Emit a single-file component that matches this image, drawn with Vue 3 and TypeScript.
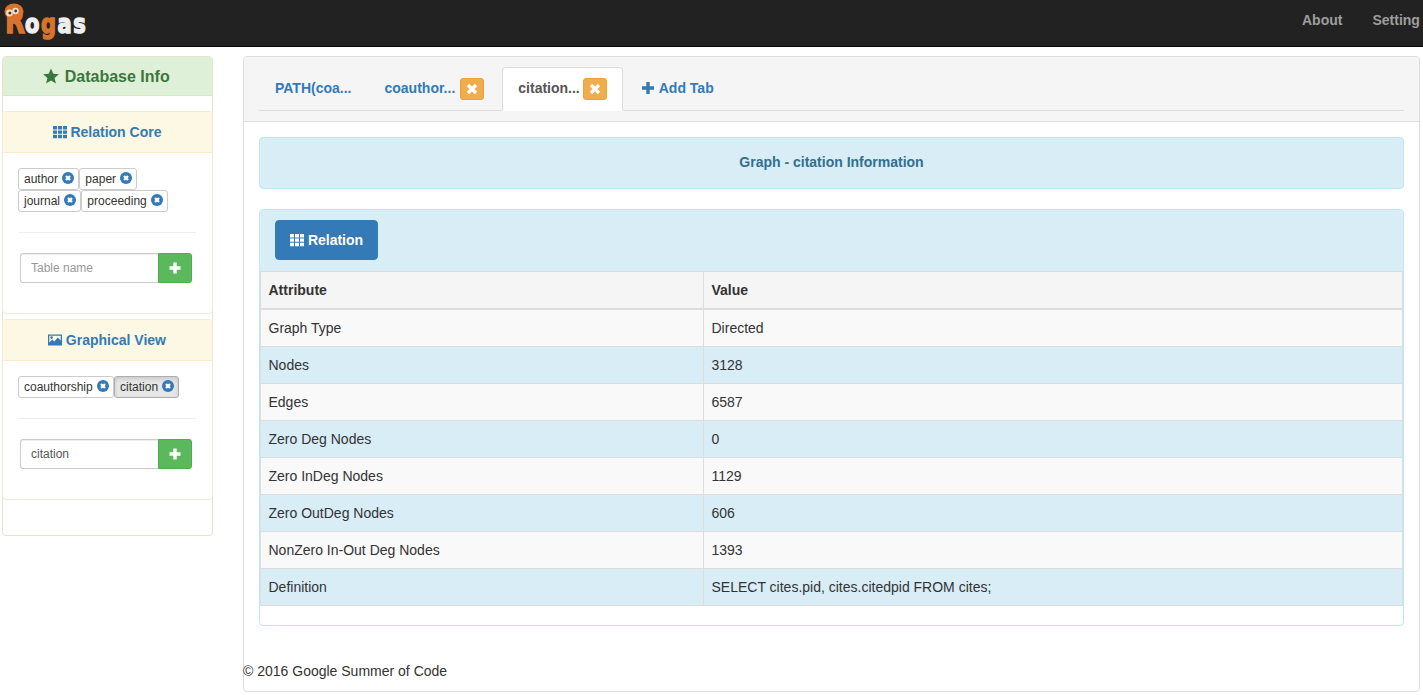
<script setup lang="ts">
interface Tag { name: string; active?: boolean }
const relationTags: Tag[] = [{ name: 'author' }, { name: 'paper' }, { name: 'journal' }, { name: 'proceeding' }]
const graphTags: Tag[] = [{ name: 'coauthorship' }, { name: 'citation', active: true }]
const rows: [string, string][] = [
  ['Graph Type', 'Directed'],
  ['Nodes', '3128'],
  ['Edges', '6587'],
  ['Zero Deg Nodes', '0'],
  ['Zero InDeg Nodes', '1129'],
  ['Zero OutDeg Nodes', '606'],
  ['NonZero In-Out Deg Nodes', '1393'],
  ['Definition', 'SELECT cites.pid, cites.citedpid FROM cites;'],
]
</script>

<template>
  <div class="page">
    <nav class="nav">
      <div class="logo">
        <span class="lt big o">R</span><span class="lt w">o</span><span class="lt o">g</span><span class="lt w">a</span><span class="lt w">s</span>
        <svg class="eyes" viewBox="0 0 20 16" width="20" height="16">
          <ellipse cx="10" cy="8.5" rx="9.5" ry="8" fill="#d9722c" />
          <circle cx="5.5" cy="10" r="3.4" fill="#f3e2d2" /><circle cx="11.5" cy="8" r="3.2" fill="#f3e2d2" />
          <circle cx="5.9" cy="10" r="1.5" fill="#5a2c12" /><circle cx="11.7" cy="8" r="1.4" fill="#5a2c12" />
        </svg>
      </div>
      <div class="links"><a>About</a><a>Setting</a></div>
    </nav>

    <div class="content">
      <aside class="side">
        <div class="side-head">
          <svg class="ic star" viewBox="0 0 16 16" width="16" height="16"><path fill="currentColor" d="M8 .6l2.3 5.2 5.6.5-4.3 3.7 1.3 5.5L8 12.6l-4.9 2.9 1.3-5.5L.1 6.3l5.6-.5z" /></svg>
          Database Info
        </div>
        <div class="side-body">
          <section class="sub first">
            <div class="sub-head">
              <svg class="ic" viewBox="0 0 14 14" width="14" height="14"><path fill="currentColor" d="M0 1h4v3.4H0zM5 1h4v3.4H5zM10 1h4v3.4h-4zM0 5.4h4v3.4H0zM5 5.4h4v3.4H5zM10 5.4h4v3.4h-4zM0 9.8h4v3.4H0zM5 9.8h4v3.4H5zM10 9.8h4v3.4h-4z" /></svg>
              Relation Core
            </div>
            <div class="sub-body">
              <div class="tags">
                <span v-for="t in relationTags" :key="t.name" class="tag">{{ t.name }} <svg class="rm" viewBox="0 0 12 12" width="12" height="12"><circle cx="6" cy="6" r="6" fill="#337ab7" /><path d="M4 4l4 4M8 4l-4 4" stroke="#fff" stroke-width="2.4" /></svg></span>
              </div>
              <hr class="rule" />
              <div class="add">
                <input class="field" placeholder="Table name" />
                <button class="plus"><svg viewBox="0 0 12 12" width="12" height="12"><path d="M6 .5v11M.5 6h11" stroke="#fff" stroke-width="3.4" /></svg></button>
              </div>
            </div>
          </section>
          <section class="sub">
            <div class="sub-head">
              <svg class="ic" viewBox="0 0 14 14" width="14" height="14"><path fill="currentColor" fill-rule="evenodd" d="M0 1.5h14v11H0zM1.3 2.8v6.6l3-3 2 2 3.4-4 3 3.2V2.8z" /><circle cx="3.6" cy="4.6" r="1.3" fill="currentColor" /></svg>
              Graphical View
            </div>
            <div class="sub-body">
              <div class="tags">
                <span v-for="t in graphTags" :key="t.name" class="tag" :class="{ active: t.active }">{{ t.name }} <svg class="rm" viewBox="0 0 12 12" width="12" height="12"><circle cx="6" cy="6" r="6" fill="#337ab7" /><path d="M4 4l4 4M8 4l-4 4" stroke="#fff" stroke-width="2.4" /></svg></span>
              </div>
              <hr class="rule" />
              <div class="add">
                <input class="field" value="citation" />
                <button class="plus"><svg viewBox="0 0 12 12" width="12" height="12"><path d="M6 .5v11M.5 6h11" stroke="#fff" stroke-width="3.4" /></svg></button>
              </div>
            </div>
          </section>
        </div>
      </aside>

      <main class="main">
        <div class="main-head">
          <ul class="tabs">
            <li class="tab"><a>PATH(coa...</a></li>
            <li class="tab"><a>coauthor...</a><span class="close"><svg viewBox="0 0 12 12" width="12" height="12"><path d="M2 2l8 8M10 2l-8 8" stroke="#fff" stroke-width="3.4" /></svg></span></li>
            <li class="tab on"><a>citation...</a><span class="close"><svg viewBox="0 0 12 12" width="12" height="12"><path d="M2 2l8 8M10 2l-8 8" stroke="#fff" stroke-width="3.4" /></svg></span></li>
            <li class="tab"><a class="add-tab"><svg viewBox="0 0 14 14" width="14" height="14"><path d="M7 1v12M1 7h12" stroke="#337ab7" stroke-width="3.4" /></svg>Add Tab</a></li>
          </ul>
        </div>
        <div class="main-body">
          <div class="alert">Graph - citation Information</div>
          <div class="info">
            <div class="info-head">
              <button class="primary">
                <svg viewBox="0 0 14 14" width="14" height="14"><path fill="#fff" d="M0 1h4v3.4H0zM5 1h4v3.4H5zM10 1h4v3.4h-4zM0 5.4h4v3.4H0zM5 5.4h4v3.4H5zM10 5.4h4v3.4h-4zM0 9.8h4v3.4H0zM5 9.8h4v3.4H5zM10 9.8h4v3.4h-4z" /></svg>
                Relation
              </button>
            </div>
            <table class="grid">
              <colgroup><col class="c1" /><col /></colgroup>
              <thead><tr><th>Attribute</th><th>Value</th></tr></thead>
              <tbody>
                <tr v-for="r in rows" :key="r[0]"><td>{{ r[0] }}</td><td>{{ r[1] }}</td></tr>
              </tbody>
            </table>
          </div>
        </div>
        <footer class="foot">© 2016 Google Summer of Code</footer>
      </main>
    </div>
  </div>
</template>

<style>
html, body { margin: 0; background: #fff; overflow: hidden; }
</style>

<style scoped>
.page { font-family: "Liberation Sans", Arial, sans-serif; font-size: 14px; line-height: 20px; color: #333; width: 1423px; height: 695px; overflow: hidden; }
.nav { height: 46px; background: #222; border-bottom: 1px solid #080808; display: flex; justify-content: space-between; }
.logo { position: relative; display: flex; align-items: baseline; padding: 11px 0 0 5px; box-sizing: border-box; height: 46px; font-family: "DejaVu Sans", sans-serif; font-weight: 700; line-height: 1; }
.lt { display: inline-block; font-size: 21px; margin-right: 1.5px; transform: scaleY(1.3); transform-origin: 50% 85%; -webkit-text-stroke: 1.2px currentColor; }
.lt.big { font-size: 26px; margin-right: 0; transform: scaleY(1.35); }
.lt.w { color: #eee; }
.lt.o { color: #d9722c; }
.eyes { position: absolute; left: 4px; top: 3px; }
.links { display: flex; flex: none; width: 136px; font-weight: 700; color: #9d9d9d; padding-top: 10px; margin-right: -15px; }
.links a:first-child { margin-right: 30px; }
.links a { white-space: nowrap; }
.content { display: flex; align-items: flex-start; gap: 30px; padding: 9px 0 0 2px; }
.side { width: 209px; border: 1px solid #e4e4cf; border-radius: 4px; flex: none; }
.side-head { background: #dff0d8; border-bottom: 1px solid #d6e9c6; color: #3c763d; font-size: 16px; font-weight: 700; line-height: 18px; padding: 11px 2px 9px 0; text-align: center; border-radius: 3px 3px 0 0; }
.side-head .ic { vertical-align: -2px; }
.star { margin-right: 1px; }
.side-body { padding: 15px 0; }
.sub { border: 1px solid #f0ead6; border-radius: 4px; margin: 0 -1px; background: #fff; }
.sub.first { margin-bottom: 5px; }
.sub:last-child { margin-bottom: 20px; }
.sub-head { background: #fcf8e3; border-bottom: 1px solid #faebcc; color: #337ab7; font-weight: 700; padding: 10px 1px 10px 0; text-align: center; }
.sub-head .ic { vertical-align: -2px; }
.sub-body { padding: 15px 16px 30px 15px; }
.tags { display: flex; flex-wrap: wrap; }
.tag { display: block; box-sizing: border-box; height: 22px; padding: 0 4.5px 0 5px; border: 1px solid #ccc; border-radius: 3px; font-size: 12px; line-height: 20px; background: #fff; white-space: pre; }
.tag.active { background: #e6e6e6; border-color: #adadad; box-shadow: inset 0 2px 4px rgba(0, 0, 0, .125); }
.rm { vertical-align: -1px; margin-left: .5px; }
.rule { border: 0; border-top: 1px solid #eee; margin: 20px 0; }
.add { display: flex; margin: 0 4px 0 2px; height: 30px; }
.field { flex: 1; min-width: 0; box-sizing: border-box; height: 30px; padding: 5px 10px; border: 1px solid #ccc; border-right: 0; border-radius: 3px 0 0 3px; font: 12px "Liberation Sans", Arial, sans-serif; color: #555; outline: none; box-shadow: inset 0 1px 1px rgba(0, 0, 0, .075); }
.field::placeholder { color: #999; opacity: 1; }
.plus { width: 34px; flex: none; border: 1px solid #4cae4c; background: #5cb85c; border-radius: 0 3px 3px 0; padding: 0; display: flex; align-items: center; justify-content: center; }
.main { width: 1175px; flex: none; border: 1px solid #ddd; border-radius: 4px; }
.main-head { background: #f5f5f5; border-bottom: 1px solid #ddd; padding: 10px 15px; border-radius: 3px 3px 0 0; }
.tabs { list-style: none; margin: 0; padding: 0; display: flex; height: 44px; box-sizing: border-box; border-bottom: 1px solid #ddd; }
.tab { box-sizing: border-box; height: 44px; padding: 0 15px; margin-right: 2px; border: 1px solid transparent; border-radius: 4px 4px 0 0; display: flex; align-items: center; font-weight: 700; color: #337ab7; white-space: nowrap; }
.tab:first-child { margin-right: 1px; }
.tab a { margin-bottom: 2px; }
.tab.on { background: #fff; border-color: #ddd; border-bottom-color: #fff; color: #555; }
.close { width: 24px; height: 22px; margin-left: 3px; border: 1px solid #eea236; box-sizing: border-box; background: #f0ad4e; border-radius: 3px; display: flex; align-items: center; justify-content: center; }
.tab:nth-child(2) .close { margin-left: 5px; }
.add-tab { display: flex; align-items: center; gap: 4px; }
.main-body { padding: 15px; }
.alert { box-sizing: border-box; height: 52px; background: #d9edf7; border: 1px solid #bce8f1; border-radius: 4px; color: #31708f; font-weight: 700; text-align: center; line-height: 48px; margin-bottom: 20px; }
.info { border: 1px solid #bce8f1; border-radius: 4px; padding-bottom: 19px; }
.info-head { background: #d9edf7; padding: 10px 15px 11px; border-radius: 3px 3px 0 0; height: 40px; }
.primary { box-sizing: border-box; height: 40px; width: 103px; padding: 0; background: #337ab7; border: 1px solid #337ab7; border-radius: 4px; color: #fff; font: 700 14px "Liberation Sans", Arial, sans-serif; display: flex; align-items: center; justify-content: center; gap: 4px; }
.grid { width: 100%; table-layout: fixed; border-collapse: collapse; border: 1px solid #ddd; }
.c1 { width: 443px; }
.grid th, .grid td { padding: 8px 8px 8px 7.5px; text-align: left; border: 1px solid #ddd; line-height: 20px; }
.grid th { background: #f5f5f5; border-bottom-width: 2px; color: #333; }
.grid tbody tr:nth-child(odd) { background: #f9f9f9; }
.grid tbody tr:nth-child(even) { background: #d9edf7; }
.foot { margin: 20px 0 0 -1px; padding-bottom: 10px; }
</style>
